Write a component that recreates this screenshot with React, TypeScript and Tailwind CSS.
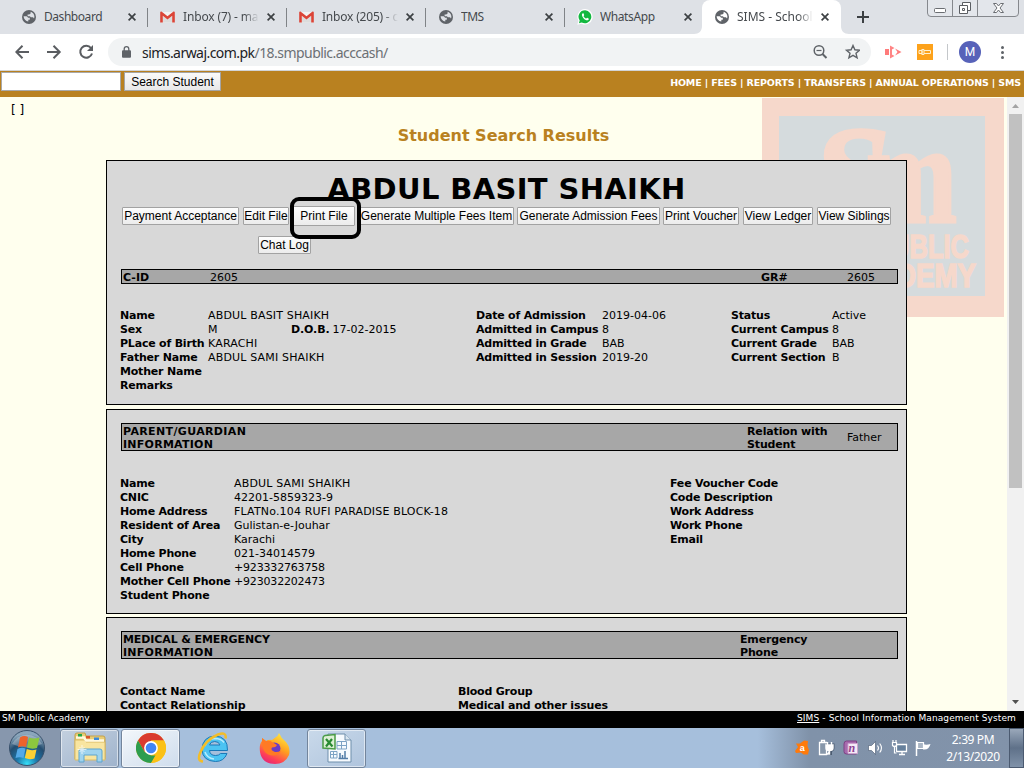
import type { ReactNode } from "react";

const VERDANA = "font-['DejaVu_Sans',Verdana,sans-serif]";
const ARIAL = "font-['Liberation_Sans',Arial,sans-serif]";
const SEGOE = "font-['Noto_Sans','Open_Sans',sans-serif]";

function Globe({ land = "#dee1e6" }: { land?: string }) {
  return (
    <svg className="size-[14px] shrink-0" viewBox="0 0 14 14">
      <circle cx="7" cy="7" r="7" fill="#5f6368" />
      <path d="M1.600 6.200h3.100l1.500 1.500H7.800v2H6.300v1.800c-2.600-.3-4.600-2.600-4.700-5.300zM8.600 1.700c2.200.6 3.800 2.500 3.800 4.900 0 .8-.1 1.400-.4 2l-1-1.400H8.800l-.9-.9H5.600V4.600h1.600l1.400-1.200z" fill={land} />
    </svg>
  );
}

function Gmail() {
  return (
    <svg className="h-[12px] w-[15px] shrink-0" viewBox="0 0 15 12">
      <path d="M1 1h13v10.500H1z" fill="#f2f2f2" />
      <path d="M3 5l4.500 3.500L12 5v6.500H3z" fill="#dcdcdc" />
      <path d="M.2 1.200C.2.400 1.200.200 1.800.700l5.700 4.500L13.200.7c.6-.5 1.600-.3 1.600.5v10.400h-2.600V4.700L7.500 8.400 2.800 4.700v6.900H.2z" fill="#db4437" />
    </svg>
  );
}

function WhatsApp() {
  return (
    <svg className="size-[16px] shrink-0" viewBox="0 0 16 16">
      <path d="M8.100.1a7.700 7.700 0 0 0-6.600 11.600L.3 15.800l4.200-1.100A7.700 7.700 0 1 0 8.100.1z" fill="#fff" />
      <path d="M8.100 1.300a6.500 6.500 0 0 0-5.400 10.200l-.8 2.700 2.800-.7A6.500 6.500 0 1 0 8.100 1.300z" fill="#12b840" />
      <path d="M5.700 4.300c-1.500 1-.8 3 .8 4.900s3.900 2.900 5 1.500c.5-.6.400-1.100 0-1.300l-1.300-.7c-.6-.2-.8 1.100-1.400.8C7.900 9.100 7 8.300 6.600 7.300c-.2-.5.8-.8.6-1.300l-.6-1.400c-.2-.4-.5-.5-.9-.3z" fill="#fff" />
    </svg>
  );
}

function Close() {
  return (
    <svg className="size-[8px] shrink-0" viewBox="0 0 8 8">
      <path d="M.6.6l6.800 6.800M7.400.6L.6 7.400" stroke="#3c4043" strokeWidth="1.700" />
    </svg>
  );
}

function Tab({ icon, title, last, fade }: { icon: ReactNode; title: ReactNode; last?: boolean; fade?: boolean }) {
  return (
    <div className="relative flex h-[34px] w-[139px] shrink-0 items-center pl-[11px]">
      <span className="flex w-[17px] justify-center">{icon}</span>
      <span className={`ml-[7px] w-[76px] overflow-hidden text-[12px] whitespace-nowrap text-[#45494d] ${fade ? "mask-r-from-80%" : ""}`}>{title}</span>
      <span className="ml-[8px] flex"><Close /></span>
      {!last && <span className="absolute top-[8px] right-0 h-[19px] w-px bg-[#808387]" />}
    </div>
  );
}

function TabStrip() {
  return (
    <div className={`relative flex h-[34px] bg-[#dee1e6] pl-[9px] ${SEGOE}`}>
      <Tab icon={<Globe />} title={<span className="tracking-[-0.45px]">Dashboard</span>} />
      <Tab icon={<Gmail />} title={<span className="tracking-[-0.15px]">Inbox (7) - ma</span>} fade />
      <Tab icon={<Gmail />} title={<span className="tracking-[-0.2px]">Inbox (205) - c</span>} fade />
      <Tab icon={<Globe />} title={<span className="tracking-[-0.5px]">TMS</span>} />
      <Tab icon={<WhatsApp />} title={<span className="tracking-[-0.4px]">WhatsApp</span>} last />
      <div className="-ml-[2px] w-[139px] rounded-t-[8px] bg-white">
        <Tab icon={<Globe land="#ffffff" />} title={<span>SIMS - School</span>} last fade />
      </div>
      <svg className="absolute top-[26px] left-[694px] h-[8px] w-[155px]" viewBox="0 0 155 8">
        <path d="M0 8c5 0 8-3 8-8v8zM155 8c-5 0-8-3-8-8v8z" fill="#fff" />
      </svg>
      <svg className="mt-[11px] ml-[16px] size-[12px]" viewBox="0 0 12 12">
        <path d="M6 0v12M0 6h12" stroke="#3c4043" strokeWidth="2" />
      </svg>
      <svg className="absolute top-0 right-[4px] h-[18px] w-[94px]" viewBox="0 0 94 18">
        <path d="M1.500-2v15q0 3.500 3.500 3.500h84q3.500 0 3.500-3.500v-15zM26.500 0v16M51.500 0v16" fill="#e3e6eb" stroke="#85888d" />
        <rect x="8.500" y="8.500" width="11" height="4" rx="1" fill="#fff" stroke="#6a6d72" />
        <path d="M36.500 2.500h8v8h-8z" fill="#fff" stroke="#5b5e63" />
        <path d="M33.500 5.500h8v8h-8zM36.500 8.500h2v2h-2z" fill="#fff" stroke="#5b5e63" />
        <path d="M67.500 3.500h3l2 2.500 2-2.500h3l-3.500 4.500 3.500 4.500h-3l-2-2.500-2 2.500h-3l3.500-4.500z" fill="#fff" stroke="#6a6d72" />
      </svg>
    </div>
  );
}

function Toolbar() {
  return (
    <div className={`flex h-[37px] items-center border-b border-[#d2d4d6] bg-white pl-[15px] ${SEGOE}`}>
      <svg className="h-[16px] w-[80px]" viewBox="0 0 80 16" fill="none" stroke="#5a5d61" strokeWidth="2">
        <path d="M14 8H1.500M7.500 1.800L1.300 8l6.200 6.200" />
        <path d="M32 8h12.500M38.500 1.800L44.700 8l-6.200 6.200" />
        <path d="M76 4A6 6 0 1 0 77 9.500" />
        <path d="M78 1v6h-6z" fill="#5a5d61" stroke="none" />
      </svg>
      <div className="ml-[13px] flex h-[28px] w-[763px] items-center rounded-full bg-[#f1f3f4] pl-[14px]">
        <svg className="h-[12px] w-[9px]" viewBox="0 0 9 12">
          <path d="M2.200 5V3a2.300 2.300 0 0 1 4.600 0v2" fill="none" stroke="#5f6368" strokeWidth="1.300" />
          <rect x="0" y="4.300" width="9" height="7.400" rx="1" fill="#5f6368" />
        </svg>
        <span className="ml-[11px] text-[14px] tracking-[-0.55px] whitespace-nowrap text-[#6c7074]"><span className="text-[#202124]">sims.arwaj.com.pk</span>/18.smpublic.acccash/</span>
        <svg className="mr-[11px] ml-auto h-[16px] w-[47px]" viewBox="0 0 47 16" fill="none" stroke="#5f6368">
          <circle cx="6" cy="6.500" r="4.800" strokeWidth="1.500" />
          <path d="M9.500 10l4 4" strokeWidth="2" />
          <path d="M3.500 6.500h5" strokeWidth="1.200" />
          <path d="M40 1.500l1.900 4.300 4.600.400-3.500 3.100 1.100 4.600-4.100-2.500-4.100 2.500 1.100-4.600-3.500-3.100 4.600-.400z" strokeWidth="1.400" />
        </svg>
      </div>
      <svg className="ml-[14px] h-[14px] w-[17px]" viewBox="0 0 17 14">
        <path d="M0 4h4v6H0z" fill="#ff7b7b" />
        <path d="M5 .5l4.500 2.500L7 4.500v5L9.500 11 5 13.500z" fill="#ff8585" />
        <path d="M7 4.500l5 2.500-5 2.500z" fill="#fff" />
        <path d="M10 3.500L16.500 7 10 10.500 12.500 7z" fill="#ff7b7b" />
      </svg>
      <svg className="ml-[15px] size-[16px]" viewBox="0 0 16 16">
        <path d="M0 0h16v16H0z" fill="#fda21b" />
        <path d="M2 6.500h3v3H2zM5 5v6M5 5.500h2v5H5M7 6.500h6.500v3H7" fill="none" stroke="#fff0cf" />
      </svg>
      <span className="ml-[14px] h-[16px] w-px bg-[#c4c7ca]" />
      <span className="ml-[11px] flex size-[22px] items-center justify-center rounded-full bg-[#5762b9] font-[Roboto,sans-serif] text-[12px] text-white">M</span>
      <span className="ml-[20px] flex flex-col gap-[2px]">
        <i className="size-[3px] rounded-full bg-[#5f6368]" /><i className="size-[3px] rounded-full bg-[#5f6368]" /><i className="size-[3px] rounded-full bg-[#5f6368]" />
      </span>
    </div>
  );
}

function NavBar() {
  return (
    <div className="flex h-[26px] bg-[#b98120] pt-px pl-px">
      <input className="h-[19px] w-[120px] border border-[#a9a9a9] bg-white" />
      <button className={`ml-[3px] h-[19px] w-[97px] border border-[#a5a5a5] bg-gradient-to-b from-[#fafafa] to-[#e8e8e8] text-[12px] leading-[18px] whitespace-nowrap text-black ${ARIAL}`}>Search Student</button>
      <span className={`mt-[3px] mr-[3px] ml-auto text-[9.5px] leading-[16px] font-bold tracking-[-0.15px] whitespace-nowrap text-white ${VERDANA}`}>HOME | FEES | REPORTS | TRANSFERS | ANNUAL OPERATIONS | SMS</span>
    </div>
  );
}

function SchoolLogo() {
  return (
    <svg className="absolute top-px left-[762px] h-[219px] w-[242px]" viewBox="0 0 242 219">
      <path d="M0 0h242v219H0z" fill="#f6d8cb" />
      <path d="M17 18h206v180H17z" fill="#d5dbdd" />
      <g fill="#f6d8cb" stroke="#f6d8cb" strokeWidth="3" className="font-['Liberation_Serif',serif] font-bold">
        <text x="50" y="126" fontSize="142" fontStyle="italic" textLength="78" lengthAdjust="spacingAndGlyphs">S</text>
        <text x="104" y="124" fontSize="142" textLength="91" lengthAdjust="spacingAndGlyphs">m</text>
      </g>
      <g fill="#f6d8cb" stroke="#f6d8cb" strokeWidth="1.500" className="font-['Liberation_Sans',sans-serif] font-bold">
        <text x="112" y="160" fontSize="34" textLength="95" lengthAdjust="spacingAndGlyphs">PUBLIC</text>
        <text x="74" y="189" fontSize="33" textLength="140" lengthAdjust="spacingAndGlyphs">ACADEMY</text>
      </g>
    </svg>
  );
}

function Btn({ className, children }: { className: string; children: ReactNode }) {
  return (
    <button className={`flex shrink-0 items-center justify-center rounded-[1px] border border-[#a2a2a2] bg-gradient-to-b from-[#fdfdfd] to-[#ececec] text-[12px] leading-[16px] whitespace-nowrap text-black ${ARIAL} ${className}`}>{children}</button>
  );
}

function Card({ className, children }: { className: string; children: ReactNode }) {
  return <section className={`relative ml-[106px] w-[801px] border border-black bg-[#d8d8d8] ${className}`}>{children}</section>;
}

const bar = "ml-[14px] flex w-[777px] border border-black bg-[#a7a7a7] pl-px text-[11px]";
const label = "font-bold tracking-[-0.2px]";

const personal = [
  ["Name", "ABDUL BASIT SHAIKH", "Date of Admission", "2019-04-06", "Status", "Active"],
  ["Sex", "M", "Admitted in Campus", "8", "Current Campus", "8"],
  ["PLace of Birth", "KARACHI", "Admitted in Grade", "BAB", "Current Grade", "BAB"],
  ["Father Name", "ABDUL SAMI SHAIKH", "Admitted in Session", "2019-20", "Current Section", "B"],
  ["Mother Name", "", "", "", "", ""],
  ["Remarks", "", "", "", "", ""],
];

const guardian = [
  ["Name", "ABDUL SAMI SHAIKH", "Fee Voucher Code"],
  ["CNIC", "42201-5859323-9", "Code Description"],
  ["Home Address", "FLATNo.104 RUFI PARADISE BLOCK-18", "Work Address"],
  ["Resident of Area", "Gulistan-e-Jouhar", "Work Phone"],
  ["City", "Karachi", "Email"],
  ["Home Phone", "021-34014579", ""],
  ["Cell Phone", "+923332763758", ""],
  ["Mother Cell Phone", "+923032202473", ""],
  ["Student Phone", "", ""],
];

function valueTracking(value: string) {
  if (/^[A-Z.]{4,}/.test(value)) return "tracking-[0.17px]";
  if (value.startsWith("+")) return "tracking-[-0.18px]";
  return "";
}

function Page() {
  return (
    <main className={`relative h-[614px] overflow-hidden bg-[#ffffee] text-[11px] text-black ${VERDANA}`}>
      <SchoolLogo />
      <div className="relative h-[63px] w-[1007px]">
        <p className="h-[28px] pt-[5px] pl-[11px] text-[12px] leading-[16px]">[ ]</p>
        <h2 className="text-center text-[16px] leading-[22px] font-bold text-[#b98120]">Student Search Results</h2>
      </div>

      <Card className="h-[245px]">
        <h1 className="h-[45px] pt-[11px] text-center text-[29px] leading-[35px] font-bold tracking-[0.35px] whitespace-nowrap">ABDUL BASIT SHAIKH</h1>
        <div className="flex h-[20px] items-center pl-[15px]">
          <Btn className="h-[18px] w-[117px]">Payment Acceptance</Btn>
          <Btn className="ml-[4px] h-[18px] w-[46px]">Edit File</Btn>
          <Btn className="ml-[4px] h-[20px] w-[62px]">Print File</Btn>
          <Btn className="ml-[4px] h-[18px] w-[155px]">Generate Multiple Fees Item</Btn>
          <Btn className="ml-[3px] h-[18px] w-[143px]">Generate Admission Fees</Btn>
          <Btn className="ml-[3px] h-[18px] w-[76px]">Print Voucher</Btn>
          <Btn className="ml-[4px] h-[18px] w-[70px]">View Ledger</Btn>
          <Btn className="ml-[4px] h-[18px] w-[74px]">View Siblings</Btn>
        </div>
        <Btn className="mt-[10px] ml-[151px] h-[18px] w-[53px]">Chat Log</Btn>
        <div className="absolute top-[36px] left-[183px] h-[42px] w-[71px] rounded-[9px] border-[4px] border-black" />
        <div className={`${bar} mt-[15px] h-[15px] leading-[15px]`}>
          <b className="w-[87px]">C-ID</b>
          <span className="w-[551px]">2605</span>
          <b className="w-[86px]">GR#</b>
          <span>2605</span>
        </div>
        <div className="mt-[25px] ml-[13px] leading-[14px]">
          {personal.map((r) => (
            <div key={r[0]} className="grid h-[14px] grid-cols-[88px_268px_126px_129px_101px_60px] whitespace-nowrap">
              <b className={label}>{r[0]}</b>
              {r[0] === "Sex" ? (
                <span className="flex"><span className="w-[83px]">{r[1]}</span><b className="tracking-[-0.1px]">D.O.B.</b><span className="ml-[3px]">17-02-2015</span></span>
              ) : (
                <span className={valueTracking(r[1])}>{r[1]}</span>
              )}
              <b className={label}>{r[2]}</b>
              <span>{r[3]}</span>
              <b className={label}>{r[4]}</b>
              <span>{r[5]}</span>
            </div>
          ))}
        </div>
      </Card>

      <Card className="mt-[4px] h-[205px] pt-[13px]">
        <div className={`${bar} h-[28px] pt-px leading-[13px]`}>
          <b className="w-[624px]"><span className="tracking-[0.36px]">PARENT/GUARDIAN</span><br /><span className="tracking-[0.25px]">INFORMATION</span></b>
          <b className="w-[100px] tracking-[-0.15px]">Relation with<br />Student</b>
          <span className="pt-[6px]">Father</span>
        </div>
        <div className="mt-[26px] ml-[13px] leading-[14px]">
          {guardian.map((r) => (
            <div key={r[0]} className="grid h-[14px] grid-cols-[114px_436px_200px] whitespace-nowrap">
              <b className={label}>{r[0]}</b>
              <span className={valueTracking(r[1])}>{r[1]}</span>
              <b className={label}>{r[2]}</b>
            </div>
          ))}
        </div>
      </Card>

      <Card className="mt-[3px] h-[205px] pt-[13px]">
        <div className={`${bar} h-[28px] pt-px leading-[13px]`}>
          <b className="w-[617px]"><span className="tracking-[-0.1px]">MEDICAL &amp; EMERGENCY</span><br /><span className="tracking-[0.25px]">INFORMATION</span></b>
          <b className="tracking-[-0.15px]">Emergency<br />Phone</b>
        </div>
        <div className={`mt-[26px] ml-[13px] grid grid-cols-[338px_300px] leading-[14px] ${label}`}>
          <span>Contact Name</span><span>Blood Group</span>
          <span>Contact Relationship</span><span>Medical and other issues</span>
        </div>
      </Card>

      <div className="absolute top-0 right-0 flex h-[614px] w-[17px] flex-col items-center bg-[#f1f1f1]">
        <svg className="h-[17px] w-[17px] shrink-0" viewBox="0 0 17 17"><path d="M5 11l3.500-4 3.500 4z" fill="#a3a3a3" /></svg>
        <div className="h-[374px] w-[13px] bg-[#c1c1c1]" />
        <svg className="mt-auto h-[17px] w-[17px] shrink-0" viewBox="0 0 17 17"><path d="M5 6l3.500 4L12 6z" fill="#505050" /></svg>
      </div>
    </main>
  );
}

function Orb() {
  return (
    <svg className="ml-[8px] size-[38px] shrink-0" viewBox="0 0 38 38">
      <defs>
        <radialGradient id="orb" cx=".5" cy=".95" r=".85"><stop offset="0" stopColor="#35dff8" /><stop offset=".35" stopColor="#1d76a9" /><stop offset=".7" stopColor="#234d70" /><stop offset="1" stopColor="#8ba6bb" /></radialGradient>
      </defs>
      <circle cx="19" cy="19" r="17.500" fill="url(#orb)" stroke="#38506b" />
      <path d="M4 15a16 14 0 0 1 30 0q-15 7-30 0z" fill="#fff" opacity=".28" />
      <path d="M12 8.500q4-2.500 8-.5L18 18q-4-1.500-8 .5z" fill="#ed632c" />
      <path d="M21 8.500q4.500 2 10.500 0L29 19q-5.500 1.500-10-.5z" fill="#8cc73e" />
      <path d="M9.500 20q4-2 8-.5L15.500 29q-4-1.500-8 0z" fill="#53a9e8" />
      <path d="M18.800 20q4.200 2 9.700.5L26.500 29.500q-5.500 1.500-9.700-.5z" fill="#fcd034" />
    </svg>
  );
}

function Explorer() {
  return (
    <svg className="size-[34px]" viewBox="0 0 34 34">
      <path d="M2 4q0-2 2-2h8l1 3h17q2 0 2 2v21H2z" fill="#e9cd76" stroke="#c3a14a" />
      <path d="M2 9h9l2 2h19v18H2z" fill="#f8e5a0" stroke="#d9bb66" />
      <path d="M3 6.500h8l2 3h18" fill="none" stroke="#fff9df" strokeWidth="2.500" />
      <path d="M5 3h4v2.500H5z" fill="#23a646" /><path d="M13 5h4v2.500h-4z" fill="#d9542b" /><path d="M21 6.500h5V9h-5z" fill="#3c8ad8" />
      <path d="M6 31V20q0-2 2-2h19q2 0 2 2v11h-5v-7H11v7z" fill="#9fd3ee" stroke="#5da5cf" />
      <path d="M9 14v9M4.500 18.500h9M6.500 16l5 5M11.500 16l-5 5" stroke="#fff" opacity=".7" />
    </svg>
  );
}

function Chrome() {
  return (
    <svg className="size-[30px]" viewBox="0 0 30 30">
      <circle cx="15" cy="15" r="15" fill="#fbc116" />
      <path d="M2 7.500A15 15 0 0 1 28 7.500H15L8.500 18.700z" fill="#d93a2f" />
      <path d="M2 7.500L8.500 18.700 15 22.500h6.500L15 30A15 15 0 0 1 2 7.500z" fill="#2c9d4f" />
      <path d="M28 7.500H15l6.500 11.300L15 30A15 15 0 0 0 28 7.500z" fill="#fbc116" />
      <circle cx="15" cy="15" r="6.900" fill="#fff" />
      <circle cx="15" cy="15" r="5.300" fill="#4285f4" />
    </svg>
  );
}

function InternetExplorer() {
  return (
    <svg className="size-[32px]" viewBox="0 0 32 32">
      <path d="M30.500 18.500H12.500q.5 5 6 5 3.500 0 5-2h6.500Q27 29.500 18.500 29.500 5.500 29 5 17.500 5.500 4.500 18 4 31 4.500 30.500 18.500zM12.500 13h10.500Q22 9.500 17.700 9.500T12.500 13z" fill="#4cc3f2" stroke="#1b78b7" />
      <path d="M8 14q2-7 10-7.500 6 0 9 4M8 20q2 6 9 7" fill="none" stroke="#b5ecfd" strokeWidth="1.500" />
      <path d="M6 29.500q-6.500-.5-2.500-9.500Q8.500 8 21 2.500q9-3 7.500 4" fill="none" stroke="#f3bd28" strokeWidth="2.500" />
    </svg>
  );
}

function Firefox() {
  return (
    <svg className="size-[31px]" viewBox="0 0 31 31">
      <defs><linearGradient id="fx" x1=".8" y1="0" x2=".3" y2="1"><stop offset="0" stopColor="#fff044" /><stop offset=".45" stopColor="#ffa01f" /><stop offset=".8" stopColor="#ff4057" /><stop offset="1" stopColor="#e42778" /></linearGradient></defs>
      <path d="M20 0q2 5 6 8 6 6 4 14-4 9-14 9Q3 31 1 19 0 11 3 8V5l4 3q3-2 6-1l4-3q2-1 3-4z" fill="url(#fx)" />
      <circle cx="15.500" cy="15.500" r="6" fill="#6b3cc5" />
      <path d="M3 8V5l4 3q4-1 6 1l5 3q-1 2.500-5 2.500-2 2.500 3 4.500 3 .5 6-1.500-2 5-8 5Q3 22 3 8z" fill="#ff7a24" />
    </svg>
  );
}

function Excel() {
  return (
    <svg className="h-[30px] w-[32px]" viewBox="0 0 32 30">
      <path d="M7 1h17l6 6v22H7z" fill="#f6fafe" stroke="#6e8fac" />
      <path d="M24 1v6h6" fill="#d8e5f0" stroke="#6e8fac" />
      <path d="M16 8.500h9.500V16H16zM20.500 8.500V16M9.500 18.500H16v6.500H9.500zM12.500 18.500V25M9.500 21.500H16M16 12.500h9.500" fill="none" stroke="#7da3c5" />
      <path d="M19 25v-5M21.500 25v-3M24 25v-7M17.500 25.500H27" stroke="#527da8" strokeWidth="1.500" />
      <path d="M2 5q0-2 2-2.500L14 1.500v14.500L2 15z" fill="#dcefd4" stroke="#4a9c46" strokeWidth="1.500" />
      <path d="M5 6l6.500 7.500M11 6l-6 7.500" stroke="#288a32" strokeWidth="2.200" />
    </svg>
  );
}

function Tray() {
  return (
    <svg className="h-[18px] w-[136px]" viewBox="0 0 136 18">
      <path d="M1 4.500h4L9 1.500l4 .5-.5 5 1.500 4-1 4.500H8.500L6 13.500l-5 .500L0 12l3-4z" fill="#ff7a0a" />
      <text x="4.800" y="11.500" fontSize="9" fontWeight="bold" fill="#fff" className="font-['Liberation_Sans',sans-serif]">a</text>
      <path d="M24.500 3.500h7v12h-7zM26.500 1.500h3v2h-3z" fill="#8797aa" stroke="#fff" strokeWidth="1.300" />
      <path d="M31 6h7v3q0 2-2.500 2.500v3H33" fill="none" stroke="#4b5b70" strokeWidth="3" />
      <path d="M31 6h7v3q0 2.500-3.500 2.500T31 9zM32.500 3v3M36.500 3v3M34.500 11v4H32" fill="#fff" stroke="#fff" strokeWidth="1.400" />
      <path d="M51.500 2h10v13h-10q-2.500 0-2.500-2.500V5q0-3 2.500-3z" fill="#a86bae" stroke="#7d4284" />
      <path d="M53 4.500h9.500v10H53z" fill="#f5eaf6" stroke="#c9a3cd" />
      <text x="53.500" y="13" fontSize="12" fontStyle="italic" fontWeight="bold" fill="#8d4291" className="font-['Liberation_Serif',serif]">n</text>
      <path d="M73.500 6.500h3l4-4v13l-4-4h-3z" fill="#fff" stroke="#45566d" strokeWidth=".6" />
      <path d="M82.500 6.500q2 2.500 0 5M84.700 4.500q3.500 4.500 0 9" fill="none" stroke="#fff" strokeWidth="1.100" />
      <path d="M101.500 5.500h10v7h-10zM104 15.500h6M107 13v3" fill="#66809c" stroke="#fff" strokeWidth="1.300" />
      <path d="M97.500 3.500h4v3q-2 2-4 0zM98 1v3M101 1v3M99.500 7v7h2" fill="#7c8fa8" stroke="#fff" strokeWidth="1.200" />
      <path d="M121.500 2v15" stroke="#fff" strokeWidth="1.500" />
      <path d="M122.500 3.500h6v6h-6z" fill="#a9b5c4" stroke="#fff" strokeWidth="1.200" />
      <path d="M128 5q3 1.500 7.500 0-1.500 5.500-6 5.500H128z" fill="#fff" />
    </svg>
  );
}

const slot = "flex h-[39px] w-[59px] shrink-0 items-center justify-center";
const running = "rounded-[3px] border border-[#73859c] shadow-[inset_0_0_0_1px_#ffffff88]";

function Taskbar() {
  return (
    <div className={`flex h-[40px] items-center bg-gradient-to-r from-[#a6bfdc] from-[74%] via-[#8092a9] via-[79%] to-[#8293aa] ${SEGOE}`}>
      <div className="flex h-[40px] w-[60px] items-center bg-[#8797ad]"><Orb /></div>
      <div className={`${slot} ${running} bg-gradient-to-br from-[#c3d0df] to-[#9fb3cc]`}><Explorer /></div>
      <div className={`${slot} ${running} ml-[2px] bg-gradient-to-br from-[#f3f7fb] to-[#cedcec]`}><Chrome /></div>
      <div className={`${slot} ml-[3px]`}><InternetExplorer /></div>
      <div className={`${slot} ml-[3px]`}><Firefox /></div>
      <div className={`${slot} ${running} ml-[3px] bg-gradient-to-br from-[#c9d9ea] to-[#afc4dd]`}><Excel /></div>
      <div className="ml-auto flex items-center text-white">
        <Tray />
        <div className="ml-[6px] w-[72px] text-center text-[12px] leading-[17px] tracking-[-0.4px]"><div>2:39 PM</div><div>2/13/2020</div></div>
        <div className="h-[40px] w-[15px] border border-[#4b5a70] bg-gradient-to-b from-[#9aa8ba] via-[#5f7189] to-[#8092a9]" />
      </div>
    </div>
  );
}

export default function App() {
  return (
    <div className="flex h-[768px] w-[1024px] flex-col overflow-hidden">
      <TabStrip />
      <Toolbar />
      <NavBar />
      <Page />
      <footer className={`flex h-[17px] justify-between bg-black pr-[8px] pl-[2px] text-[9px] leading-[14px] text-white ${VERDANA}`}>
        <span>SM Public Academy</span>
        <span className="tracking-[0.11px]"><u>SIMS</u> - School Information Management System</span>
      </footer>
      <Taskbar />
    </div>
  );
}
